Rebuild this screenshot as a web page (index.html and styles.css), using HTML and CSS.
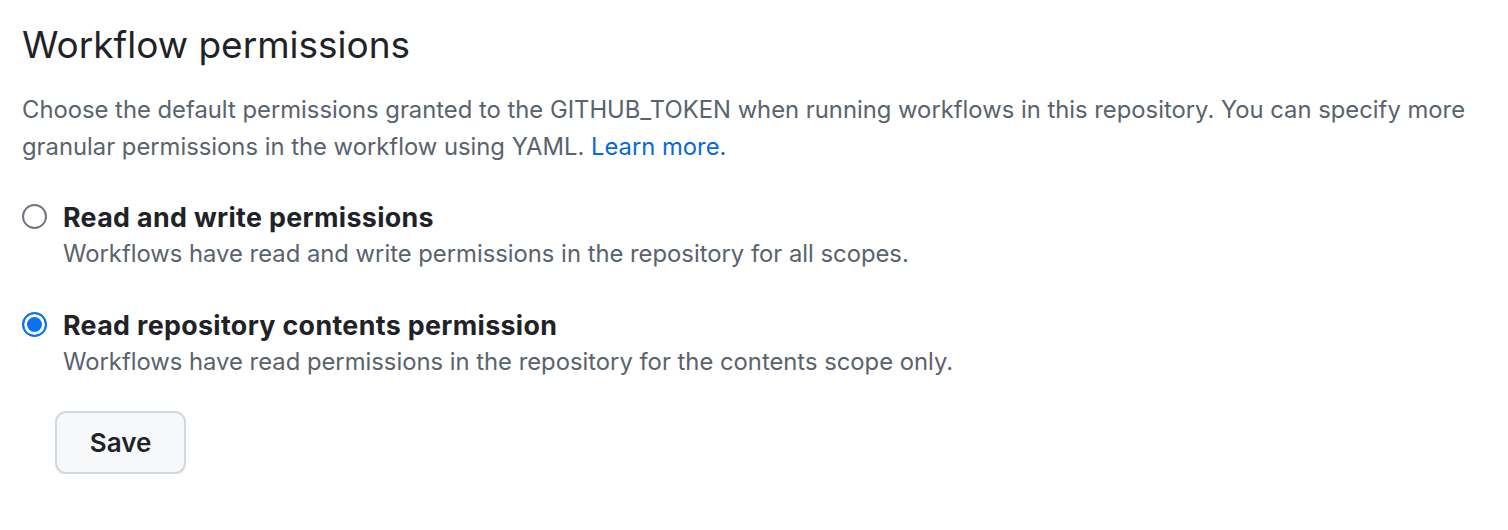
FILE: index.html
```html
<!DOCTYPE html>
<html>
<head>
<meta charset="utf-8">
<link rel="stylesheet" href="styles.css">
</head>
<body>
<div class="page">
  <h2 class="title">Workflow permissions</h2>
  <p class="intro">Choose the default permissions granted to the GITHUB_TOKEN when running workflows in this repository. You can specify more granular permissions in the workflow using YAML. <a href="#" class="link">Learn more.</a></p>
  <div class="option">
    <span class="radio"></span>
    <div class="option-text">
      <div class="label">Read and write permissions</div>
      <div class="desc">Workflows have read and write permissions in the repository for all scopes.</div>
    </div>
  </div>
  <div class="option">
    <span class="radio checked"></span>
    <div class="option-text">
      <div class="label">Read repository contents permission</div>
      <div class="desc">Workflows have read permissions in the repository for the contents scope only.</div>
    </div>
  </div>
  <div class="actions">
    <button class="btn">Save</button>
  </div>
</div>
</body>
</html>
```
FILE: styles.css
```css
* { box-sizing: border-box; }
html, body { margin: 0; padding: 0; background: #ffffff; }
body { font-family: Inter, "Noto Sans", sans-serif; color: #1f2328; }
.page { padding: 22px 22px 0 22px; }
.title { margin: 0; font-size: 37px; font-weight: 400; line-height: 46px; color: #1f2328; }
.intro { margin: 23px 0 0 0; font-size: 23.8px; line-height: 37px; color: #59636e; }
.link { color: #0969da; text-decoration: none; }
.option { display: flex; align-items: flex-start; gap: 16px; margin-top: 34px; }
.option + .option { margin-top: 35px; }
.radio { flex: none; width: 25px; height: 25px; border-radius: 50%; border: 2px solid #6e7781; margin-top: 5px; background: #fff; }
.radio.checked { border: 2px solid #0a72f0; background: #0a72f0; box-shadow: inset 0 0 0 3px #fff; }
.label { font-size: 26.8px; font-weight: 700; letter-spacing: 0.35px; line-height: 36px; color: #1f2328; }
.desc { font-size: 23.8px; line-height: 37px; color: #59636e; }
.actions { padding-left: 33px; margin-top: 31px; }
.btn { font-family: inherit; font-size: 26px; font-weight: 600; color: #1f2328; background: #f6f8fa; border: 2px solid #d1d9e0; border-radius: 11px; width: 131px; height: 63px; box-shadow: 0 2px 0 rgba(31,35,40,0.04); }
```
